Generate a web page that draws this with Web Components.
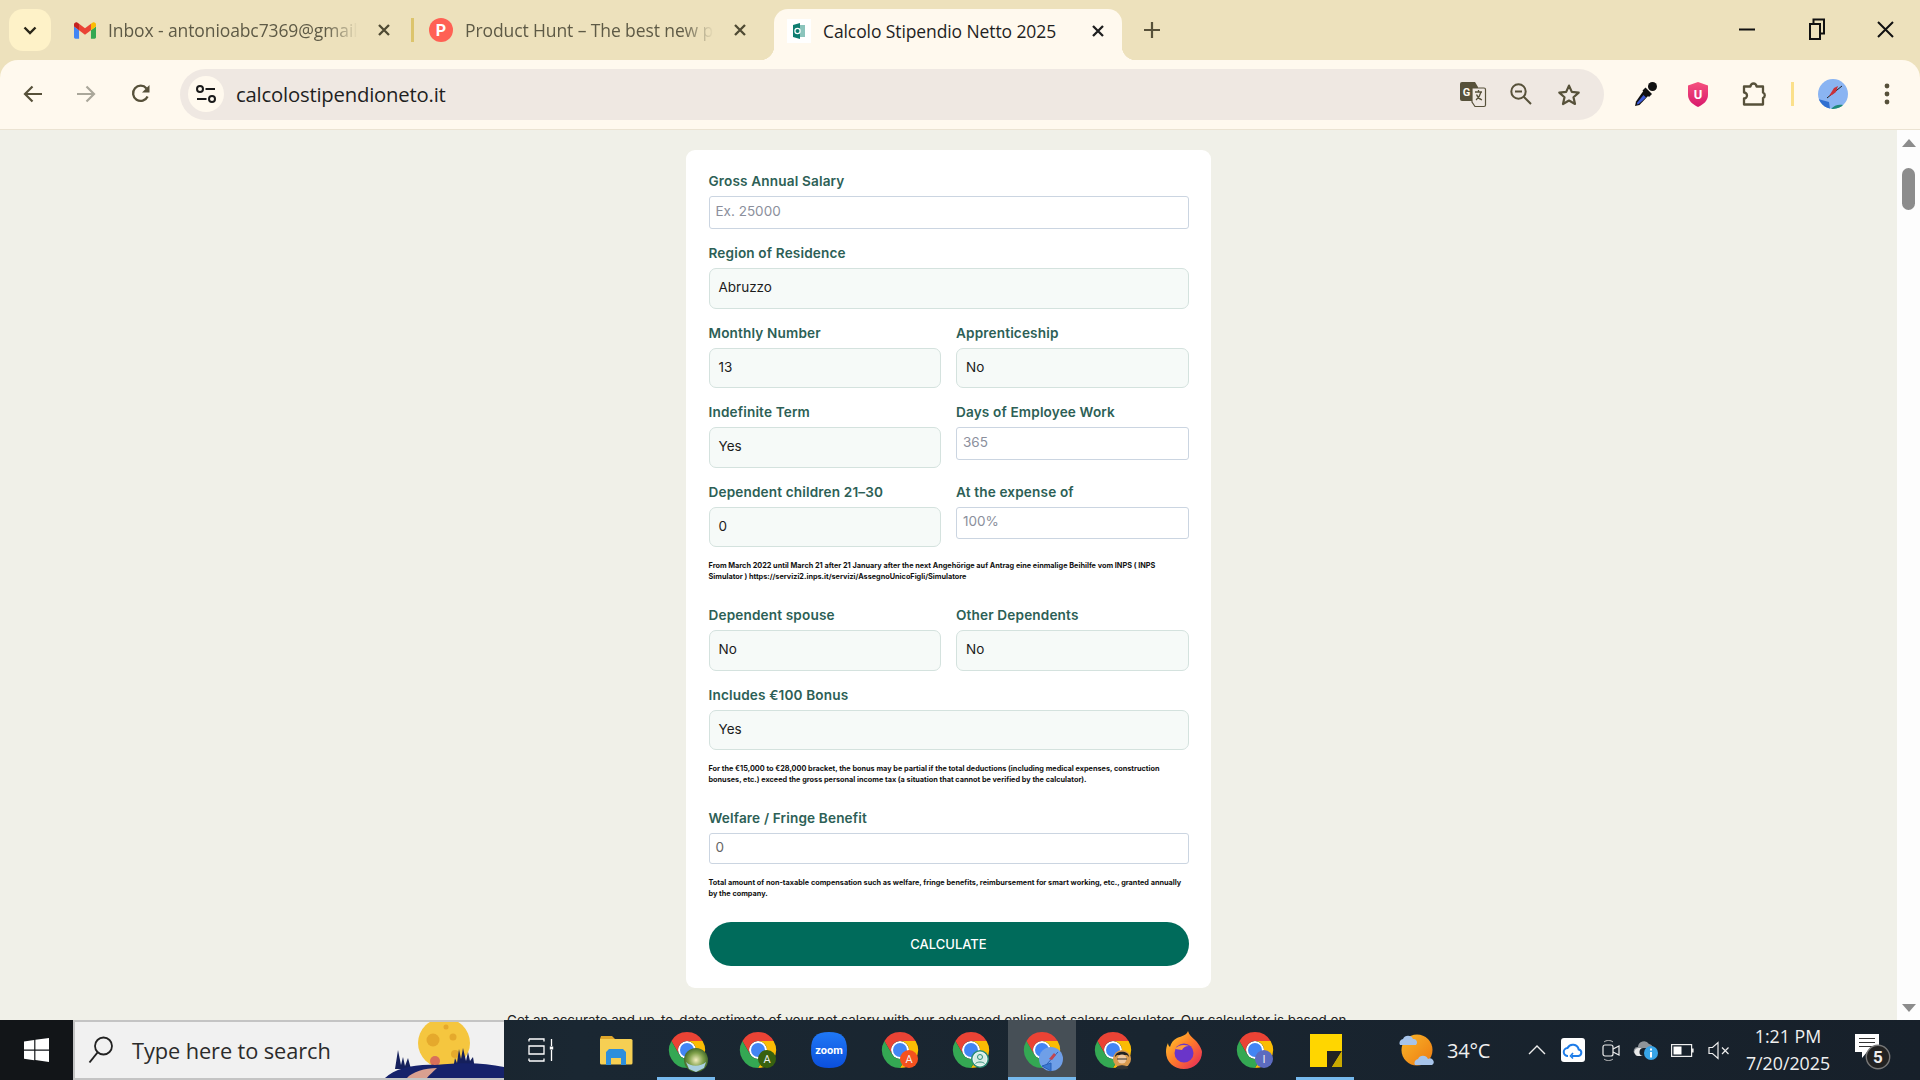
<!DOCTYPE html>
<html lang="en">
<head>
<meta charset="utf-8">
<title>Calcolo Stipendio Netto 2025</title>
<style>
  html, body { margin: 0; height: 100%; overflow: hidden; }
  body { display: flex; flex-direction: column; width: 1920px; height: 1080px; font-family: "Open Sans", sans-serif; background: #f0f0e8; }
</style>
</head>
<body>
  <tab-strip>
    <browser-tab title="Inbox - antonioabc7369@gmail" icon="gmail" style="width:352px;--pl:13px;--pr:16px;--gap:11px"></browser-tab>
    <browser-tab sep title="Product Hunt – The best new products" icon="ph" style="width:358px;margin-left:2px;--pl:15px;--pr:20px;--gap:12px"></browser-tab>
    <browser-tab active title="Calcolo Stipendio Netto 2025" icon="calc" style="width:348px;margin-left:2px;--pl:13px;--pr:12px;--gap:12px"></browser-tab>
  </tab-strip>
  <nav-toolbar></nav-toolbar>
  <app-page>
    <calc-card>
      <form-field label="Gross Annual Salary" kind="input" value="Ex. 25000"></form-field>
      <form-field label="Region of Residence" value="Abruzzo"></form-field>
      <form-row>
        <form-field label="Monthly Number" value="13"></form-field>
        <form-field label="Apprenticeship" value="No"></form-field>
      </form-row>
      <form-row>
        <form-field label="Indefinite Term" value="Yes"></form-field>
        <form-field label="Days of Employee Work" kind="input" value="365"></form-field>
      </form-row>
      <form-row>
        <form-field label="Dependent children 21–30" value="0"></form-field>
        <form-field label="At the expense of" kind="input" value="100%" style="--input-h:32px"></form-field>
      </form-row>
      <form-note>From March 2022 until March 21 after 21 January after the next Angehörige auf Antrag eine einmalige Beihilfe vom INPS ( INPS<br>Simulator ) https://servizi2.inps.it/servizi/AssegnoUnicoFigli/Simulatore</form-note>
      <form-row>
        <form-field label="Dependent spouse" value="No"></form-field>
        <form-field label="Other Dependents" value="No"></form-field>
      </form-row>
      <form-field label="Includes €100 Bonus" value="Yes"></form-field>
      <form-note>For the €15,000 to €28,000 bracket, the bonus may be partial if the total deductions (including medical expenses, construction<br>bonuses, etc.) exceed the gross personal income tax (a situation that cannot be verified by the calculator).</form-note>
      <form-field label="Welfare / Fringe Benefit" kind="input" value="0" style="--input-h:31px;--input-c:#666"></form-field>
      <form-note style="margin-bottom:23px">Total amount of non-taxable compensation such as welfare, fringe benefits, reimbursement for smart working, etc., granted annually<br>by the company.</form-note>
      <calc-button>CALCULATE</calc-button>
    </calc-card>
  </app-page>
  <os-taskbar></os-taskbar>

<script>
// chrome logo, badge drawn on top of it
function chrome(badge = '') {
  return `<svg width="46" height="46" viewBox="0 0 46 46">
    <circle cx="18" cy="18" r="9" fill="#fff"/>
    <path fill="#ea4335" d="M33.6 9A18 18 0 0 0 2.4 9l7.81 13.5A9 9 0 0 1 18 9z"/>
    <path fill="#fbbc04" d="M33.6 9A18 18 0 0 1 18 36l7.79-13.5A9 9 0 0 0 18 9z"/>
    <path fill="#34a853" d="M2.4 9A18 18 0 0 0 18 36l7.79-13.5a9 9 0 0 1-15.58 0z"/>
    <circle cx="18" cy="18" r="7" fill="#4285f4"/>
    ${badge}
  </svg>`;
}
const letterBadge = (bg, ch) => `<circle cx="27" cy="27" r="9" fill="${bg}"/><text x="27" y="31" font-size="11" font-family="Roboto, sans-serif" fill="#eee" text-anchor="middle">${ch}</text>`;

const ICONS = {
  gmail: `<svg width="22" height="17" viewBox="0 0 24 18"><path fill="#4285f4" d="M1.6 18h3.9V8.8L0 4.7v11.7C0 17.3.7 18 1.6 18z"/><path fill="#34a853" d="M18.5 18h3.9c.9 0 1.6-.7 1.6-1.6V4.7l-5.5 4.1z"/><path fill="#fbbc04" d="M18.5 1.7v7.1L24 4.7V2.5c0-2-2.3-3.2-3.9-2z"/><path fill="#ea4335" d="M5.5 8.8V1.7L12 6.5l6.5-4.8v7.1L12 13.6z"/><path fill="#c5221f" d="M0 2.5v2.2l5.5 4.1V1.7L3.9.5C2.3-.7 0 .5 0 2.5z"/></svg>`,
  ph: `<svg width="24" height="24" viewBox="0 0 24 24"><circle cx="12" cy="12" r="12" fill="#ff6154"/><text x="12" y="17.5" font-size="16" font-weight="700" font-family="Roboto, sans-serif" fill="#fff" text-anchor="middle">P</text></svg>`,
  calc: `<svg width="24" height="24" viewBox="0 0 24 24"><rect width="24" height="24" fill="#fff"/><path fill="#0e7d70" d="M6 6l7-2v16l-7-2z"/><path fill="#8bc4bc" d="M13 6h5v12h-5z"/><circle cx="10.5" cy="12" r="2.6" fill="none" stroke="#fff" stroke-width="1.2"/></svg>`,
  close: `<svg width="14" height="14" viewBox="0 0 14 14"><path d="M2 2l10 10M12 2L2 12" stroke="currentColor" stroke-width="2.3"/></svg>`,
  plus: `<svg width="18" height="18" viewBox="0 0 18 18"><path d="M9 1v16M1 9h16" stroke="#57513a" stroke-width="2.2"/></svg>`,
  chevron: `<svg width="14" height="9" viewBox="0 0 14 9"><path d="M1.5 1.5L7 7l5.5-5.5" fill="none" stroke="#2a2618" stroke-width="2.4"/></svg>`,
  winmin: `<svg width="16" height="3" viewBox="0 0 16 3"><path d="M0 1.5h16" stroke="#111" stroke-width="2"/></svg>`,
  winrestore: `<svg width="16" height="22" viewBox="0 0 16 22"><path d="M1 6h10v15H1zM4.5 5.5V1.5H15v14h-3.5" fill="none" stroke="#111" stroke-width="2"/></svg>`,
  winclose: `<svg width="17" height="17" viewBox="0 0 17 17"><path d="M1 1l15 15M16 1L1 16" stroke="#111" stroke-width="2"/></svg>`,
  back: `<svg width="20" height="18" viewBox="0 0 20 18"><path d="M19 9H2M9.5 1.5L2 9l7.5 7.5" fill="none" stroke="#57513a" stroke-width="2.2"/></svg>`,
  forward: `<svg width="20" height="18" viewBox="0 0 20 18"><path d="M1 9h17M10.5 1.5L18 9l-7.5 7.5" fill="none" stroke="#aaa79a" stroke-width="2.2"/></svg>`,
  reload: `<svg width="20" height="20" viewBox="0 0 20 20"><path d="M16.6 12.5A7.6 7.6 0 1 1 15.5 4.4" fill="none" stroke="#57513a" stroke-width="2.3"/><path d="M18.5 1v7.5H11z" fill="#57513a"/></svg>`,
  tune: `<svg width="20" height="18" viewBox="0 0 20 18"><circle cx="4" cy="4" r="3" fill="none" stroke="#1a1a1a" stroke-width="2"/><path d="M9.5 4H19M1 14h9.5" stroke="#1a1a1a" stroke-width="2"/><circle cx="16" cy="14" r="3" fill="none" stroke="#1a1a1a" stroke-width="2"/></svg>`,
  translate: `<svg width="26" height="25" viewBox="0 0 26 25"><path d="M2 0h13l3 5v14H2a2 2 0 0 1-2-2V2a2 2 0 0 1 2-2z" fill="#57513a"/><path d="M12 6h12a1.5 1.5 0 0 1 1.5 1.5V23a1.5 1.5 0 0 1-1.5 1.5H15L12 20z" fill="#efe8e2" stroke="#57513a" stroke-width="1.2"/><text x="6.5" y="13.5" font-size="11" font-weight="700" font-family="Roboto, sans-serif" fill="#fff9ee" text-anchor="middle">G</text><path d="M15 10h7M18.5 8v2M21 10c-.8 3.5-2.6 6-5 8M16.5 12.5c1 2.6 3 4.6 5.5 5.5" fill="none" stroke="#57513a" stroke-width="1.3"/></svg>`,
  zoomout: `<svg width="22" height="22" viewBox="0 0 22 22"><circle cx="8.5" cy="8.5" r="7.2" fill="none" stroke="#57513a" stroke-width="2"/><path d="M5 8.5h7" stroke="#57513a" stroke-width="2"/><path d="M13.7 13.7L21 21" stroke="#57513a" stroke-width="2"/></svg>`,
  star: `<svg width="24" height="23" viewBox="0 0 24 23"><path d="M12 2.6l2.8 6.3 6.9.7-5.2 4.6 1.5 6.8-6-3.5-6 3.5 1.5-6.8-5.2-4.6 6.9-.7z" fill="none" stroke="#57513a" stroke-width="2.2" stroke-linejoin="round"/></svg>`,
  dropper: `<svg width="24" height="26" viewBox="0 0 24 26"><circle cx="18.5" cy="5.5" r="4.5" fill="#111"/><path d="M11.5 6.5l6.5 6.5-3 3-6.5-6.500z" fill="#111"/><path d="M10 9l5 5L5.500 24 1 25l1-4.500z" fill="#111"/><path d="M9.500 14l2.500 2.500L4.800 23l-2 .5.5-2z" fill="#3d5bd6"/></svg>`,
  shield: `<svg width="22" height="25" viewBox="0 0 22 25"><defs><linearGradient id="u" x1="0" y1="0" x2="0" y2="1"><stop offset="0" stop-color="#f5527d"/><stop offset="1" stop-color="#d8186c"/></linearGradient></defs><path d="M11 0l10 3.5V13c0 5.500-4.500 9.500-10 12C5.500 22.500 1 18.500 1 13V3.500z" fill="url(#u)"/><text x="11" y="17" font-size="13" font-weight="700" font-family="Roboto, sans-serif" fill="#fff" text-anchor="middle">U</text></svg>`,
  puzzle: `<svg width="25" height="24" viewBox="0 0 25 24"><path d="M2 4.500h6.500a3 3 0 0 1 6 0H21v6a3 3 0 0 1 0 5.500v6.500H2v-6a3 3 0 0 0 0-6z" fill="none" stroke="#57513a" stroke-width="2.3" stroke-linejoin="round"/></svg>`,
  avatar: `<svg width="30" height="30" viewBox="0 0 30 30"><defs><clipPath id="ac"><circle cx="15" cy="15" r="15"/></clipPath></defs><g clip-path="url(#ac)"><rect width="30" height="30" fill="#8ab4f2"/><path d="M0 20l11 3 1 7H0z" fill="#2f6fd0"/><path d="M13 30c3-4 8-5 12-4v4z" fill="#1f8a78"/><path d="M9 19L24 7" stroke="#222" stroke-width="1"/><path d="M11 17l5-8 4-2-2 6-4 3z" fill="#c8323a"/></g></svg>`,
  dots: `<svg width="6" height="22" viewBox="0 0 6 22"><circle cx="3" cy="3" r="2.4" fill="#57513a"/><circle cx="3" cy="11" r="2.4" fill="#57513a"/><circle cx="3" cy="19" r="2.4" fill="#57513a"/></svg>`,
  windows: `<svg width="25" height="24" viewBox="0 0 25 24"><path fill="#fff" d="M0 3.4L10.200 2v9.500H0zM11.400 1.800L25 0v11.500H11.400zM0 12.700h10.200v9.500L0 20.700zM11.400 12.700H25V24l-13.600-1.900z"/></svg>`,
  lens: `<svg width="26" height="28" viewBox="0 0 26 28"><circle cx="15.5" cy="10" r="8.5" fill="none" stroke="#222" stroke-width="1.8"/><path d="M9.500 16.500L1.500 26.500" stroke="#222" stroke-width="2"/></svg>`,
  moon: `<svg width="119" height="57" viewBox="0 0 119 57" style="display:block"><ellipse cx="59" cy="22" rx="26" ry="25" fill="#f5c63f"/><circle cx="48" cy="19" r="6.5" fill="#e5a92c"/><circle cx="68" cy="16" r="3.5" fill="#e5a92c"/><circle cx="61" cy="6" r="2.5" fill="#e5a92c"/><circle cx="70" cy="33" r="4" fill="#e5a92c"/><circle cx="50" cy="40" r="5" fill="#d9705a"/><path fill="#15205c" d="M10 48l3-19 3 15 2-8 2 9 3-8 3 11zM68 48l2-11 2 5 2-14 2 10 2-11 3 13 2-9 2 9 3-4 2 12z"/><path fill="#16226b" d="M0 57c10-9 28-14 50-13 30-3 50-2 69 2v11z"/><path fill="#d9a090" d="M22 57c5-6 18-10 30-10-4 4-8 7-10 10z"/></svg>`,
  taskview: `<svg width="25" height="24" viewBox="0 0 25 24"><path d="M1 1h15v2.500M1 1v2.500M1 23h15v-2.500M1 23v-2.500M1 8h15v8H1z" fill="none" stroke="#fff" stroke-width="1.3"/><path d="M23.500 1v7M23.500 12v11" stroke="#fff" stroke-width="1.3"/><rect x="21.800" y="8.500" width="3.4" height="3" fill="#fff"/></svg>`,
  explorer: `<svg width="34" height="29" viewBox="0 0 34 29"><path d="M2 0h11l3 3H1z" fill="#dfa62a"/><path d="M1 3h31a1.500 1.500 0 0 1 1.500 1.500V27a1.500 1.500 0 0 1-1.500 1.500H2.500A1.500 1.500 0 0 1 1 27z" fill="#f6cf53"/><path d="M7 16l3-3h14l3 3v13h-5v-7H12v7H7z" fill="#2e8fdc"/></svg>`,
  chrome1: chrome(`<defs><radialGradient id="p" cx=".5" cy=".5" r=".6"><stop offset="0" stop-color="#f3eec0"/><stop offset=".5" stop-color="#7fa04a"/><stop offset="1" stop-color="#28501c"/></radialGradient></defs><circle cx="27" cy="28" r="12" fill="url(#p)"/><path d="M17 30c5 5 14 5 20 0l-2 6-8 4-7-3z" fill="#a9cfe0"/>`),
  chrome2: chrome(letterBadge('#38610f', 'A')),
  chrome3: chrome(letterBadge('#f4511e', 'A')),
  chrome4: chrome(`<circle cx="27" cy="27" r="9" fill="#2d8d77"/><circle cx="27" cy="27" r="7" fill="#d6ece5" stroke="#fff"/><circle cx="27" cy="25" r="2.5" fill="none" stroke="#2d8d77"/><path d="M22.500 31.500c2-2 7-2 9 0" fill="none" stroke="#2d8d77"/>`),
  chrome5: chrome(`<circle cx="27" cy="27" r="12" fill="#6f9fe8"/><path d="M18 34l9-3v8zM22 33L34 20" stroke="#2a60b8" fill="#3b78d2"/><path d="M25 27l5-6 2 2-4 5z" fill="#c24650"/>`),
  chrome6: chrome(`<circle cx="27" cy="27" r="9" fill="#d99a4e"/><path d="M20 25c0-7 14-7 14 0l-2-2H22z" fill="#222"/><circle cx="27" cy="27" r="4.5" fill="#f0c8a0"/><path d="M22 27h10M21 36c2-3 10-3 12 0l-6 1z" stroke="#333" fill="#333" stroke-width="1"/>`),
  chrome7: chrome(letterBadge('#5c6bc0', 'I')),
  zoom: `<svg width="36" height="36" viewBox="0 0 36 36"><defs><linearGradient id="z" x1="0" y1="0" x2="0" y2="1"><stop offset="0" stop-color="#1f78f5"/><stop offset="1" stop-color="#0b4fdc"/></linearGradient></defs><path d="M18 0c13 0 18 5 18 18s-5 18-18 18S0 31 0 18 5 0 18 0z" fill="url(#z)"/><text x="18" y="22" font-size="11" font-weight="700" font-family="Roboto, sans-serif" fill="#fff" text-anchor="middle">zoom</text></svg>`,
  firefox: `<svg width="36" height="38" viewBox="0 0 36 38"><defs><linearGradient id="f" x1="0" y1="0" x2="1" y2="1"><stop offset="0" stop-color="#ffd52b"/><stop offset=".5" stop-color="#ff7a2b"/><stop offset="1" stop-color="#e3205f"/></linearGradient></defs><path d="M22 0c1 4 4 6 7 9 5 5 7 10 7 12 0 10-8 17-18 17S0 31 0 21c0-3 .5-6 2-9 0 2 1 3 2 4 1-4 3-7 7-9 5-2 10-3 11-7z" fill="url(#f)"/><circle cx="18" cy="22" r="9.5" fill="#6a35c9"/><path d="M9 18c3-4 9-5 14-3-4 0-6 2-7 4z" fill="#ff9b3d"/></svg>`,
  sticky: `<svg width="32" height="33" viewBox="0 0 32 33"><rect width="32" height="33" fill="#ffd600"/><path d="M32 17H17v16h5z" fill="#222"/><path d="M32 17v16H22z" fill="#c9a900"/></svg>`,
  weather: `<svg width="38" height="38" viewBox="0 0 38 38"><defs><linearGradient id="s" x1="0" y1="0" x2="1" y2="1"><stop offset="0" stop-color="#f8b62a"/><stop offset="1" stop-color="#ee7a10"/></linearGradient></defs><circle cx="19" cy="19" r="15.500" fill="url(#s)"/><path d="M2 14a4 4 0 0 1 3-6 5.500 5.500 0 0 1 10 0 3.500 3.500 0 0 1 3 6z" fill="#a7c4ea"/><path d="M17 34a4 4 0 0 1 3-6 5.500 5.500 0 0 1 10 0 3.500 3.500 0 0 1 4 6z" fill="#a7c4ea"/></svg>`,
  caret: `<svg width="18" height="10" viewBox="0 0 18 10"><path d="M1 9l8-8 8 8" fill="none" stroke="#eee" stroke-width="1.4"/></svg>`,
  cloud: `<svg width="24" height="24" viewBox="0 0 24 24"><rect width="24" height="24" rx="3" fill="#fff"/><path d="M7 18a4 4 0 0 1-.5-8 6 6 0 0 1 11.200 1.500A3.300 3.300 0 0 1 17.500 18H11" fill="none" stroke="#1e7ce8" stroke-width="2"/><path d="M12 15l-2.500 3 2.500 2.500" fill="none" stroke="#1e7ce8" stroke-width="1.6"/></svg>`,
  meet: `<svg width="18" height="23" viewBox="0 0 18 23"><rect x="1" y="6" width="10" height="11" rx="2" fill="none" stroke="#eee" stroke-width="1.2"/><path d="M11 10l6-3v9l-6-3" fill="none" stroke="#eee" stroke-width="1.2"/><path d="M2 3c2-2 7-2 9 0M2 20c2 2 7 2 9 0" fill="none" stroke="#bbb"/></svg>`,
  onedrive: `<svg width="24" height="20" viewBox="0 0 24 20"><path d="M1 14a4 4 0 0 1 3-7 6 6 0 0 1 11-3 5 5 0 0 1 4 4H5z" fill="#8f9499"/><path d="M1 14a4 4 0 0 1 4-6h5a4 4 0 0 0-1 8H4a3 3 0 0 1-3-2z" fill="#e8e8e8"/><circle cx="17" cy="13" r="7" fill="#38a5e8"/><rect x="16" y="12" width="2" height="5.500" fill="#fff"/><rect x="16" y="8.500" width="2" height="2" fill="#fff"/></svg>`,
  battery: `<svg width="23" height="13" viewBox="0 0 23 13"><rect x=".6" y=".6" width="20" height="11.800" fill="none" stroke="#eee" stroke-width="1.2"/><rect x="2.500" y="2.500" width="8" height="8" fill="#fff"/><rect x="21" y="4.500" width="1.6" height="4" fill="#eee"/></svg>`,
  volume: `<svg width="22" height="19" viewBox="0 0 22 19"><path d="M1 6.500h3.500L10 1.500v16l-5.500-5H1z" fill="none" stroke="#eee" stroke-width="1.2"/><path d="M14 6.500l6.500 6.500M20.500 6.500L14 13" stroke="#eee" stroke-width="1.2"/></svg>`,
  notify: `<svg width="38" height="38" viewBox="0 0 38 38"><path d="M2 2h24v18H14l-5 6v-6H2z" fill="#fff"/><path d="M6 6.500h16M6 10.500h16M6 14.500h16" stroke="#333" stroke-width="1.2"/><circle cx="25" cy="25" r="11.700" fill="#222" stroke="#777" stroke-width="1.4"/><text x="25" y="31" font-size="17" font-weight="700" font-family="Roboto, sans-serif" fill="#eee" text-anchor="middle">5</text></svg>`
};

class AppIcon extends HTMLElement {
  constructor() {
    super();
    this.attachShadow({ mode: 'open' });
  }
  connectedCallback() {
    this.shadowRoot.innerHTML = `
      <style>
        :host { display: inline-flex; align-items: center; justify-content: center; flex: none; }
        svg { display: block; overflow: visible; }
      </style>
      ${ICONS[this.getAttribute('name')] || ''}`;
  }
}

class TabStrip extends HTMLElement {
  constructor() {
    super();
    this.attachShadow({ mode: 'open' }).innerHTML = `
      <style>
        :host { display: flex; flex: none; height: 60px; background: #ede1bc; align-items: flex-end; position: relative; }
        .search { width: 42px; height: 42px; margin: 0 9px 9px; border-radius: 14px; background: #fef2c8; display: flex; align-items: center; justify-content: center; flex: none; }
        ::slotted(browser-tab) { flex: none; }
        .plus { width: 30px; height: 36px; margin: 0 0 12px 15px; display: flex; align-items: center; justify-content: center; flex: none; }
        .win { margin-left: auto; display: flex; height: 60px; align-items: center; transform: translateY(-1px); }
        .win app-icon { width: 69px; height: 40px; }
        .win app-icon:first-child { width: 70px; }
      </style>
      <div class="search"><app-icon name="chevron"></app-icon></div>
      <slot></slot>
      <div class="plus"><app-icon name="plus"></app-icon></div>
      <div class="win">
        <app-icon name="winmin"></app-icon>
        <app-icon name="winrestore"></app-icon>
        <app-icon name="winclose"></app-icon>
      </div>`;
  }
}

class BrowserTab extends HTMLElement {
  constructor() {
    super();
    this.attachShadow({ mode: 'open' });
  }
  connectedCallback() {
    const active = this.hasAttribute('active');
    this.shadowRoot.innerHTML = `
      <style>
        :host { display: block; height: 51px; position: relative; }
        .tab { height: 100%; box-sizing: border-box; display: flex; align-items: center; padding: 0 var(--pr) 9px var(--pl); color: #5e5a46; font: 17.5px/24px "Open Sans", sans-serif; }
        :host([active]) .tab { background: #fff9ee; border-radius: 14px 14px 0 0; color: #1f1f1f; padding-bottom: 8px; }
        :host([active])::before, :host([active])::after { content: ""; position: absolute; bottom: 0; width: 14px; height: 14px; }
        :host([active])::before { left: -14px; background: radial-gradient(circle at 0 0, transparent 14px, #fff9ee 14.5px); }
        :host([active])::after { right: -14px; background: radial-gradient(circle at 100% 0, transparent 14px, #fff9ee 14.5px); }
        :host([sep])::before { content: ""; position: absolute; left: -3px; top: 9px; width: 3px; height: 24px; background: #dcc46c; }
        .fav { width: 24px; height: 24px; flex: none; margin-right: var(--gap); }
        .title { flex: 1; min-width: 0; white-space: nowrap; overflow: hidden; letter-spacing: -.1px; -webkit-mask-image: linear-gradient(90deg, #000 calc(100% - 46px), transparent calc(100% - 14px)); }
        :host([active]) .title { -webkit-mask-image: none; }
        .x { width: 24px; height: 24px; flex: none; color: ${active ? '#1f1f1f' : '#4f4a33'}; }
      </style>
      <div class="tab">
        <app-icon class="fav" name="${this.getAttribute('icon')}"></app-icon>
        <span class="title">${this.getAttribute('title')}</span>
        <app-icon class="x" name="close"></app-icon>
      </div>`;
    this.removeAttribute('title');
  }
}

class NavToolbar extends HTMLElement {
  constructor() {
    super();
    this.attachShadow({ mode: 'open' }).innerHTML = `
      <style>
        :host { display: flex; flex: none; height: 70px; box-sizing: border-box; background: #ede1bc; }
        .bar { flex: 1; display: flex; align-items: center; background: #fff9ee; border-radius: 18px 18px 0 0; border-bottom: 1px solid #ebe3d2; padding-left: 9px; padding-bottom: 1px; box-sizing: border-box; }
        .b { width: 48px; height: 48px; flex: none; }
        .omni { width: 1424px; height: 51px; margin-left: 15px; flex: none; box-sizing: border-box; background: #efe8e2; border-radius: 26px; display: flex; align-items: center; padding: 0 11px 0 8px; }
        .site { width: 36px; height: 36px; border-radius: 50%; background: #fff9ee; flex: none; }
        .url { margin-left: 12px; margin-right: auto; font: 20.3px/30px "Open Sans", sans-serif; color: #1f1f1f; letter-spacing: -.2px; }
        .sep { width: 3px; height: 24px; background: #fbe08a; flex: none; }
      </style>
      <div class="bar">
        <app-icon class="b" name="back"></app-icon>
        <app-icon class="b" name="forward" style="margin-left:5px"></app-icon>
        <app-icon class="b" name="reload" style="margin-left:7px"></app-icon>
        <div class="omni">
          <app-icon class="site" name="tune"></app-icon>
          <span class="url">calcolostipendioneto.it</span>
          <app-icon class="b" name="translate"></app-icon>
          <app-icon class="b" name="zoomout"></app-icon>
          <app-icon class="b" name="star"></app-icon>
        </div>
        <app-icon class="b" name="dropper" style="margin-left:18px"></app-icon>
        <app-icon class="b" name="shield" style="margin-left:4px"></app-icon>
        <app-icon class="b" name="puzzle" style="margin-left:8px"></app-icon>
        <div class="sep" style="margin-left:13px"></div>
        <app-icon class="b" name="avatar" style="margin-left:15px"></app-icon>
        <app-icon class="b" name="dots" style="margin-left:6px"></app-icon>
      </div>`;
  }
}

class AppPage extends HTMLElement {
  constructor() {
    super();
    this.attachShadow({ mode: 'open' }).innerHTML = `
      <style>
        :host { display: flex; flex: 1; min-height: 0; }
        main { flex: 1; min-width: 0; overflow: hidden; background: #f0f0e8; padding-top: 20px; display: flex; flex-direction: column; align-items: center; }
        p { margin: 20px 0 0; width: 883px; flex: none; text-align: left; font: 13.4px/24px Inter, sans-serif; color: #222; }
        .track { width: 23px; flex: none; background: #fdfdfd; display: flex; flex-direction: column; align-items: center; padding: 9px 0 8px; box-sizing: border-box; }
        .up, .down { width: 0; height: 0; border-left: 7px solid transparent; border-right: 7px solid transparent; flex: none; }
        .up { border-bottom: 8px solid #8c8c8c; }
        .down { border-top: 8px solid #8c8c8c; margin-top: auto; }
        .thumb { width: 13px; height: 42px; border-radius: 7px; background: #8c8c8c; margin-top: 21px; flex: none; }
      </style>
      <main>
        <slot></slot>
        <p>Get an accurate and up-to-date estimate of your net salary with our advanced online net salary calculator. Our calculator is based on</p>
      </main>
      <div class="track"><div class="up"></div><div class="thumb"></div><div class="down"></div></div>`;
  }
}

class CalcCard extends HTMLElement {
  constructor() {
    super();
    this.attachShadow({ mode: 'open' }).innerHTML = `
      <style>
        :host { display: flex; flex-direction: column; flex: none; width: 525px; box-sizing: border-box; padding: 23px 22.5px 22px; background: #fff; border-radius: 9px; }
      </style>
      <slot></slot>`;
  }
}

class FormRow extends HTMLElement {
  constructor() {
    super();
    this.attachShadow({ mode: 'open' }).innerHTML = `
      <style>
        :host { display: grid; grid-template-columns: 1fr 1fr; column-gap: 15px; align-items: start; }
      </style>
      <slot></slot>`;
  }
}

class FormField extends HTMLElement {
  constructor() {
    super();
    this.attachShadow({ mode: 'open' });
  }
  connectedCallback() {
    const kind = this.getAttribute('kind') || 'select';
    this.shadowRoot.innerHTML = `
      <style>
        :host { display: block; margin-bottom: 16px; }
        .label { font: 600 13.6px/16px Inter, sans-serif; color: #2d5f56; margin-bottom: 7px; letter-spacing: .15px; white-space: nowrap; }
        .box { box-sizing: border-box; display: flex; align-items: center; white-space: nowrap; }
        .select { height: 40.5px; background: #f6faf8; border: 1px solid #d4e2de; border-radius: 7px; padding: 0 9px 2px; font: 400 13.5px/18px Inter, sans-serif; color: #1c1c1c; }
        .input { height: var(--input-h, 33px); background: #fff; border: 1.5px solid #cbd5e1; border-radius: 3px; padding: 0 6px 3px; font: 400 13.5px/18px Inter, sans-serif; color: var(--input-c, #8b8f9c); }
      </style>
      <div class="label">${this.getAttribute('label')}</div>
      <div class="box ${kind}">${this.getAttribute('value')}</div>`;
  }
}

class FormNote extends HTMLElement {
  constructor() {
    super();
    this.attachShadow({ mode: 'open' }).innerHTML = `
      <style>
        :host { display: block; margin: -3.5px 0 25.5px; font: 700 7.3px/11px Inter, sans-serif; color: #111; white-space: nowrap; }
      </style>
      <slot></slot>`;
  }
}

class CalcButton extends HTMLElement {
  constructor() {
    super();
    this.attachShadow({ mode: 'open' }).innerHTML = `
      <style>
        :host { display: flex; align-items: center; justify-content: center; height: 44px; background: #006b5b; color: #fff; border-radius: 22px; font: 500 13px/20px Inter, sans-serif; }
      </style>
      <slot></slot>`;
  }
}

class TaskSlot extends HTMLElement {
  constructor() {
    super();
    this.attachShadow({ mode: 'open' }).innerHTML = `
      <style>
        :host { display: flex; align-items: center; justify-content: center; width: 71px; height: 60px; flex: none; position: relative; box-sizing: border-box; }
        :host([current]) { background: #464f56; margin: 0 1.5px; width: 68px; }
        :host([open])::after, :host([current])::after { content: ""; position: absolute; left: 0; right: 0; bottom: 0; height: 3px; background: #76b9ed; }
        :host([open])::after { left: 6px; right: 7px; }
      </style>
      <slot></slot>`;
  }
}

class OsTaskbar extends HTMLElement {
  constructor() {
    super();
    const slots = [
      ['explorer'], ['chrome1', 'open'], ['chrome2'], ['zoom'], ['chrome3'], ['chrome4'],
      ['chrome5', 'current'], ['chrome6'], ['firefox'], ['chrome7'], ['sticky', 'open']
    ].map(([name, attr]) => `<task-slot ${attr || ''}><app-icon name="${name}"${name.startsWith('chrome') ? ' style="margin:10px -10px 0 0"' : ''}></app-icon></task-slot>`).join('');
    this.attachShadow({ mode: 'open' }).innerHTML = `
      <style>
        :host { display: flex; flex: none; height: 60px; align-items: center; color: #f0f0f0; background: linear-gradient(90deg, #171d22, #1a2732 30%, #192530 60%, #17202a); font-family: "Open Sans", sans-serif; }
        .start { width: 73px; height: 60px; background: #121518; display: flex; align-items: center; justify-content: center; flex: none; }
        .search { width: 431px; height: 60px; box-sizing: border-box; background: #f1f1f1; border: solid #c4c4c4; border-width: 2px 0 2px 2px; display: flex; align-items: center; padding-left: 13px; color: #2b2b2b; font-size: 21.8px; letter-spacing: -.1px; flex: none; overflow: hidden; }
        .search span { margin-left: 18px; }
        .search app-icon:last-child { margin-left: auto; align-self: flex-end; }
        .tv { width: 72px; margin-right: 4px; display: flex; justify-content: center; flex: none; }
        .weather { margin-left: 36px; width: 40px; flex: none; }
        .temp { margin-left: 10px; font-size: 20px; letter-spacing: -.2px; width: 50px; flex: none; }
        .tray { display: flex; align-items: center; flex: none; }
        .clock { width: 110px; text-align: center; font-size: 17.8px; line-height: 27px; margin-left: 3px; flex: none; }
        .notify { margin-left: 10px; margin-top: 2px; }
      </style>
      <div class="start"><app-icon name="windows"></app-icon></div>
      <div class="search">
        <app-icon name="lens"></app-icon>
        <span>Type here to search</span>
        <app-icon name="moon"></app-icon>
      </div>
      <div class="tv"><app-icon name="taskview"></app-icon></div>
      ${slots}
      <app-icon class="weather" name="weather"></app-icon>
      <span class="temp">34°C</span>
      <div class="tray">
        <app-icon name="caret" style="margin-left:31px"></app-icon>
        <app-icon name="cloud" style="margin-left:15px"></app-icon>
        <app-icon name="meet" style="margin-left:17px"></app-icon>
        <app-icon name="onedrive" style="margin-left:14px"></app-icon>
        <app-icon name="battery" style="margin-left:13px"></app-icon>
        <app-icon name="volume" style="margin-left:14px"></app-icon>
      </div>
      <div class="clock">1:21 PM<br>7/20/2025</div>
      <app-icon class="notify" name="notify"></app-icon>`;
  }
}

customElements.define('app-icon', AppIcon);
customElements.define('tab-strip', TabStrip);
customElements.define('browser-tab', BrowserTab);
customElements.define('nav-toolbar', NavToolbar);
customElements.define('app-page', AppPage);
customElements.define('calc-card', CalcCard);
customElements.define('form-row', FormRow);
customElements.define('form-field', FormField);
customElements.define('form-note', FormNote);
customElements.define('calc-button', CalcButton);
customElements.define('task-slot', TaskSlot);
customElements.define('os-taskbar', OsTaskbar);
</script>
</body>
</html>
